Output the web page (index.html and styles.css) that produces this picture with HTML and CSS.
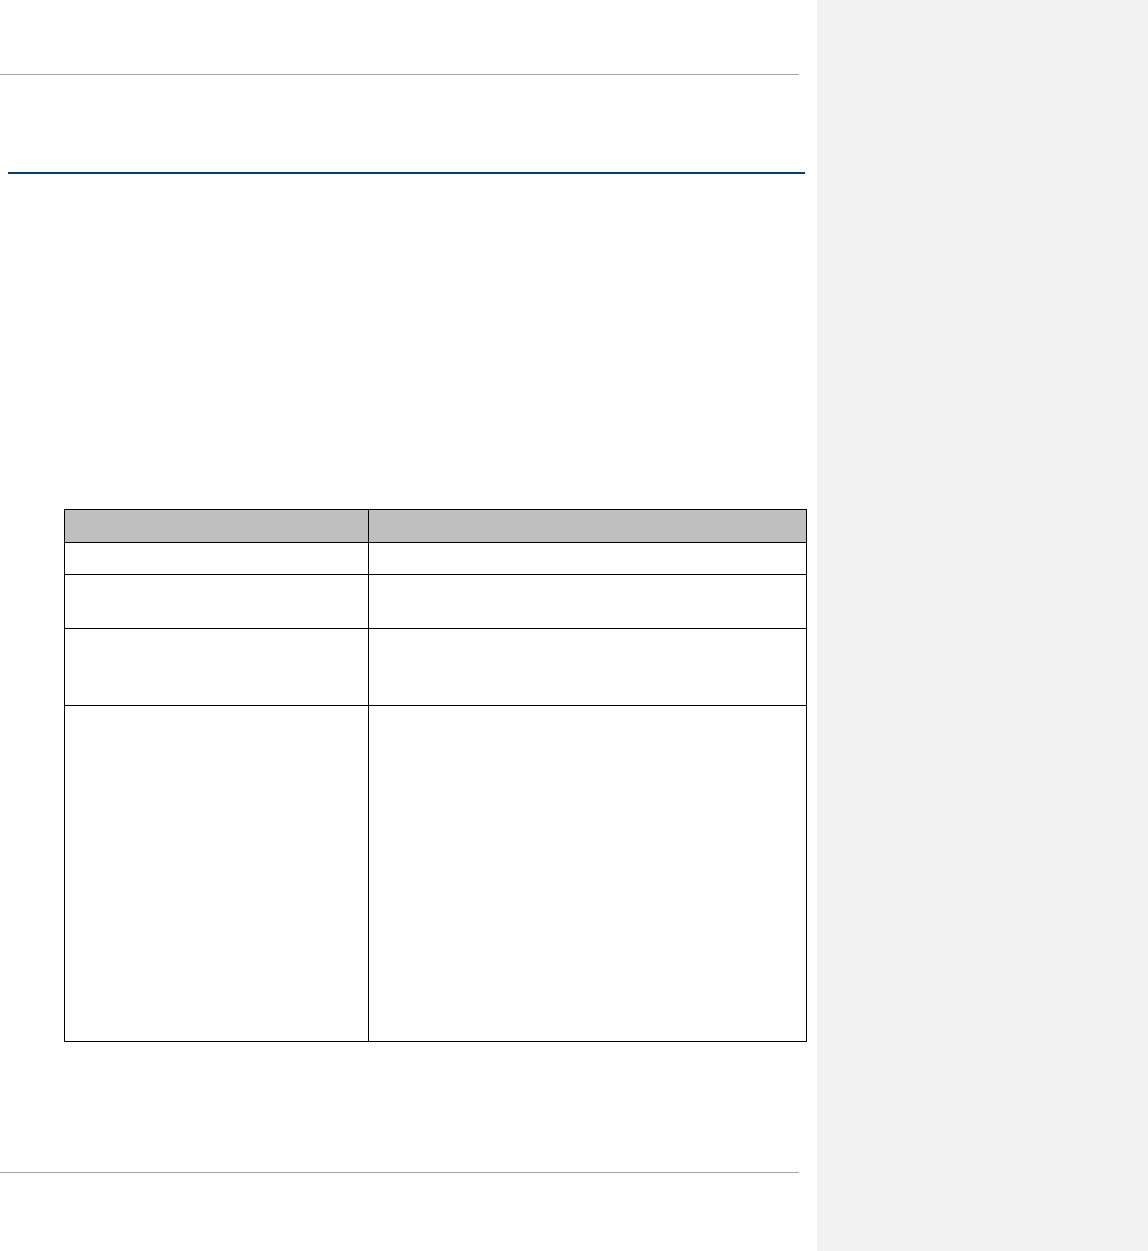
FILE: index.html
```html
<!DOCTYPE html>
<html lang="en">
<head>
  <meta charset="UTF-8" />
  <meta name="viewport" content="width=device-width, initial-scale=1.0"/>
  <title>Document</title>
  <link rel="stylesheet" href="styles.css">
</head>
<body>
  <div class="page">
    <div class="header-rule"></div>
    <div class="title-rule"></div>

    <table class="doc-table">
      <tr class="row-head"><th></th><th></th></tr>
      <tr class="row-1"><td></td><td></td></tr>
      <tr class="row-2"><td></td><td></td></tr>
      <tr class="row-3"><td></td><td></td></tr>
      <tr class="row-4"><td></td><td></td></tr>
    </table>

    <div class="footer-rule"></div>
  </div>
  <div class="comments-pane"></div>
</body>
</html>
```

FILE: styles.css
```css
body {
  margin: 0;
  font-family: 'Liberation Sans', Arial, sans-serif;
  background: #ffffff;
  display: flex;
  min-height: 1251px;
}

.page {
  width: 817px;
  flex-shrink: 0;
  padding-top: 74px;
  box-sizing: border-box;
}

.header-rule,
.footer-rule {
  width: 799px;
  height: 1px;
  background: #a6a6a6;
}

.title-rule {
  margin: 97px 0 0 8px;
  width: 797px;
  height: 2px;
  background: #003e78;
}

.doc-table {
  margin: 335px 0 0 64px;
  width: 743px;
  border-collapse: collapse;
  table-layout: fixed;
}

.doc-table th,
.doc-table td {
  border: 1px solid #000000;
  padding: 0;
}

.doc-table th:first-child,
.doc-table td:first-child {
  width: 303px;
}

.doc-table th {
  background: #bfbfbf;
}

.row-head { height: 33px; }
.row-1 { height: 32px; }
.row-2 { height: 54px; }
.row-3 { height: 77px; }
.row-4 { height: 336px; }

.footer-rule {
  margin-top: 130px;
}

.comments-pane {
  flex: 1;
  background: #f2f2f2;
}
```
